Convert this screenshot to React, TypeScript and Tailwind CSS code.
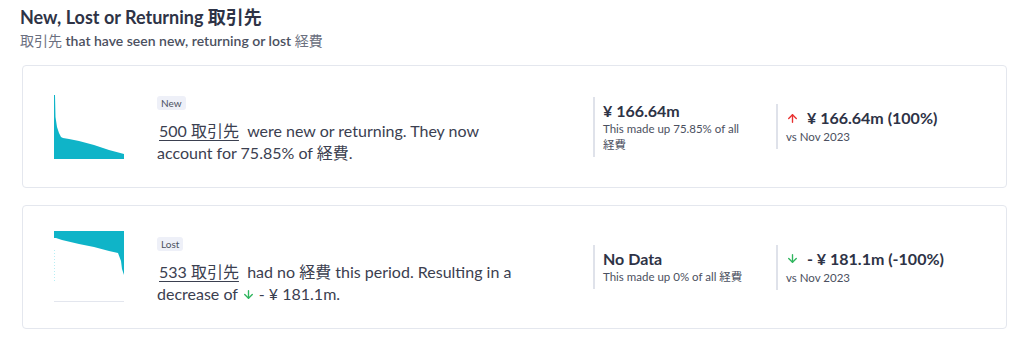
import React from 'react'
import { ArrowUp, ArrowDown } from 'lucide-react'

const font = { fontFamily: 'Lato, "Noto Sans CJK JP", sans-serif' }

const NewChart = () => (
  <svg width="70" height="64" viewBox="0 0 70 64" className="block">
    <path d="M0 0 L1 0 L1.5 22 L3 32 L5 38 L7 42 L9 43 L15 44 L25 46 L40 50 L55 55 L70 59 L70 64 L0 64 Z" fill="#0fb4c8" />
  </svg>
)

const LostChart = () => (
  <svg width="70" height="72" viewBox="0 0 70 72" className="block">
    <path d="M0 0 L70 0 L70 44 L68 38 L67 30 L64 22 L55 20 L40 16 L25 13 L8 9 L2 7 L0 7 Z" fill="#0fb4c8" />
    <line x1="0.5" y1="19" x2="0.5" y2="52" stroke="#b8eef4" strokeWidth="1" strokeDasharray="1 2" />
    <line x1="0" y1="70.5" x2="70" y2="70.5" stroke="#e3e6ee" strokeWidth="1" />
  </svg>
)

type StatProps = {
  value: React.ReactNode
  sub: string
}

const Stat = ({ value, sub }: StatProps) => (
  <div className="w-[183px] border-l-2 border-[#dfe2ea] pl-[8px] py-[4px]">
    <div className="text-[16px] font-bold leading-[20px] text-[#2e3346]">{value}</div>
    <div className="w-[150px] text-[11.5px] leading-[16px] text-[#4b5060]">{sub}</div>
  </div>
)

const Card = ({ chart, badge, text, left, right, className }: {
  chart: React.ReactNode
  badge: string
  text: React.ReactNode
  left: React.ReactNode
  right: React.ReactNode
  className?: string
}) => (
  <div className={`flex items-center rounded-[4px] border border-[#e4e7ee] bg-white pl-[31px] ${className ?? ''}`}>
    <div className="w-[70px] shrink-0">{chart}</div>
    <div className="ml-[33px] w-[436px] shrink-0">
      <span className="inline-block rounded-[3px] bg-[#eef0f8] px-[4px] text-[10px] leading-[14px] text-[#4b5060]">{badge}</span>
      <div className="mt-[7px] w-[362px] text-[16px] leading-[22px] text-[#3b4050]">{text}</div>
    </div>
    <div className="flex items-center">
      {left}
      {right}
    </div>
  </div>
)

const Under = ({ children }: { children: React.ReactNode }) => (
  <span className="ml-[2px] underline decoration-[#3b4050] underline-offset-[3px]">{children}</span>
)

export default function App() {
  return (
    <div className="w-[1024px] h-[340px] bg-white" style={font}>
      <div className="pl-[20px] pt-[5px]">
        <h1 className="text-[18px] font-bold leading-[24px] text-[#2e3346]">New, Lost or Returning 取引先</h1>
        <p className="mt-[3px] text-[14px] font-semibold leading-[18px] text-[#4b5060]">
          <span className="font-normal text-[#6b7080]">取引先</span> that have seen new, returning or lost <span className="font-normal text-[#6b7080]">経費</span>
        </p>
      </div>
      <div className="ml-[22px] mt-[15px] w-[985px]">
        <Card
          className="h-[123px]"
          chart={<NewChart />}
          badge="New"
          text={<><Under>500 取引先</Under>&nbsp; were new or returning. They now account for 75.85% of 経費.</>}
          left={<Stat value="¥ 166.64m" sub="This made up 75.85% of all 経費" />}
          right={
            <div className="w-[183px] border-l-2 border-[#dfe2ea] pl-[8px] py-[4px]">
              <div className="flex items-center text-[16px] font-bold leading-[20px] text-[#2e3346]">
                <ArrowUp size={13} strokeWidth={2.5} className="mr-[8px] text-[#e8302f]" />¥ 166.64m (100%)
              </div>
              <div className="mt-[1px] text-[11.5px] leading-[16px] text-[#4b5060]">vs Nov 2023</div>
            </div>
          }
        />
        <Card
          className="mt-[17px] h-[124px]"
          chart={<LostChart />}
          badge="Lost"
          text={<><Under>533 取引先</Under>&nbsp; had no 経費 this period. Resulting in a decrease of <ArrowDown size={13} strokeWidth={2.5} className="inline-block align-[-1px] text-[#2fb55e]" /> - ¥ 181.1m.</>}
          left={<Stat value="No Data" sub="This made up 0% of all 経費" />}
          right={
            <div className="w-[183px] border-l-2 border-[#dfe2ea] pl-[8px] py-[4px]">
              <div className="flex items-center text-[16px] font-bold leading-[20px] text-[#2e3346]">
                <ArrowDown size={13} strokeWidth={2.5} className="mr-[8px] text-[#2fb55e]" />- ¥ 181.1m (-100%)
              </div>
              <div className="mt-[1px] text-[11.5px] leading-[16px] text-[#4b5060]">vs Nov 2023</div>
            </div>
          }
        />
      </div>
    </div>
  )
}
